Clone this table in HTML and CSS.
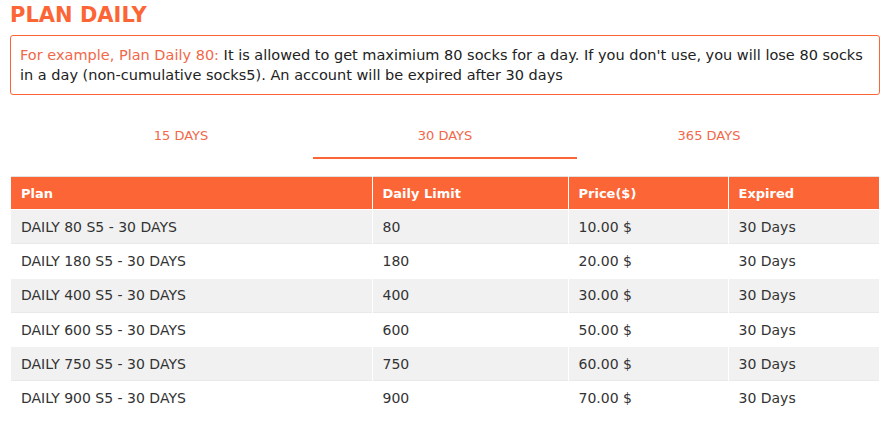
FILE: index.html
```html
<!DOCTYPE html>
<html>
<head>
<meta charset="utf-8">
<link rel="stylesheet" href="styles.css">
</head>
<body>
<div class="page">
  <h2 class="title">PLAN DAILY</h2>
  <div class="note">
    <span class="note-lead">For example, Plan Daily 80:</span> It is allowed to get maximium 80 socks for a day. If you don't use, you will lose 80 socks in a day (non-cumulative socks5). An account will be expired after 30 days
  </div>
  <div class="tabs">
    <div class="tab">15 DAYS</div>
    <div class="tab active">30 DAYS</div>
    <div class="tab">365 DAYS</div>
  </div>
  <table class="plans">
    <colgroup>
      <col class="c1"><col class="c2"><col class="c3"><col class="c4">
    </colgroup>
    <thead>
      <tr><th>Plan</th><th>Daily Limit</th><th>Price($)</th><th>Expired</th></tr>
    </thead>
    <tbody>
      <tr><td>DAILY 80 S5 - 30 DAYS</td><td>80</td><td>10.00 $</td><td>30 Days</td></tr>
      <tr><td>DAILY 180 S5 - 30 DAYS</td><td>180</td><td>20.00 $</td><td>30 Days</td></tr>
      <tr><td>DAILY 400 S5 - 30 DAYS</td><td>400</td><td>30.00 $</td><td>30 Days</td></tr>
      <tr><td>DAILY 600 S5 - 30 DAYS</td><td>600</td><td>50.00 $</td><td>30 Days</td></tr>
      <tr><td>DAILY 750 S5 - 30 DAYS</td><td>750</td><td>60.00 $</td><td>30 Days</td></tr>
      <tr><td>DAILY 900 S5 - 30 DAYS</td><td>900</td><td>70.00 $</td><td>30 Days</td></tr>
    </tbody>
  </table>
</div>
</body>
</html>
```

FILE: styles.css
```css
html, body {
  margin: 0;
  padding: 0;
  background: #fff;
}
body {
  font-family: "DejaVu Sans", Verdana, sans-serif;
  font-size: 14px;
  color: #333;
}
.page {
  padding: 0 10px 0 10px;
}
.title {
  margin: 0;
  padding-top: 4px;
  font-size: 21px;
  line-height: 22px;
  font-weight: bold;
  color: #fc6535;
}
.note {
  margin-top: 9px;
  border: 1px solid #fc6535;
  border-radius: 3px;
  padding: 9px 9px 9px 9px;
  line-height: 20px;
  color: #222;
  font-size: 14.5px;
}
.note-lead {
  color: #f2674a;
}
.tabs {
  display: flex;
  justify-content: center;
  margin-top: 18px;
}
.tab {
  width: 264px;
  height: 46px;
  line-height: 46px;
  text-align: center;
  font-size: 13px;
  color: #f2674a;
  border-bottom: 2px solid transparent;
  box-sizing: border-box;
}
.tab.active {
  border-bottom-color: #fc6535;
}
.plans {
  margin-top: 17px;
  margin-left: 1px;
  width: 868px;
  border-collapse: collapse;
  border-top: 1px solid #e2e2e2;
  font-size: 14px;
}
.c1 { width: 361px; }
.c2 { width: 196px; }
.c3 { width: 160px; }
.c4 { width: 151px; }
.plans th {
  background: #fc6535;
  color: #fff;
  font-weight: bold;
  font-size: 13px;
  text-align: left;
  height: 32px;
  padding: 0 10px;
  border-left: 1px solid #fff;
}
.plans td {
  height: 33.3px;
  padding: 0 10px;
  border-left: 1px solid #fff;
  border-top: 1px solid #e9e9e9;
  color: #333;
}
.plans th:first-child,
.plans td:first-child {
  border-left: none;
}
.plans tbody tr:nth-child(odd) td {
  background: #f1f1f1;
  border-top-color: #fff;
}
```
